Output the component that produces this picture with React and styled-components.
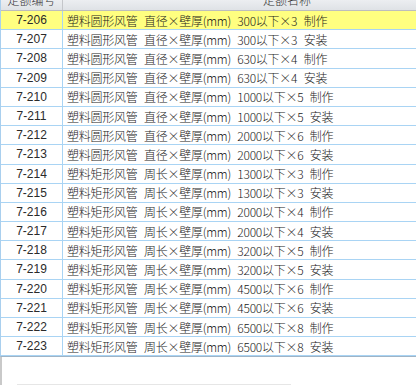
import React from 'react';
import styled, { createGlobalStyle } from 'styled-components';

const GlobalStyle = createGlobalStyle`
  html, body {
    margin: 0;
    padding: 0;
    background: #ffffff;
    overflow: hidden;
  }
`;

const Frame = styled.div`
  width: 416px;
  height: 385px;
  display: flex;
  flex-direction: column;
  overflow: hidden;
  font-family: "Noto Sans CJK SC", "Liberation Sans", sans-serif;
  font-size: 12px;
  font-weight: 300;
  color: #1a1a1a;
`;

const Grid = styled.div`
  width: 520px;
  border-left: 1px solid #a9cfee;
  border-bottom: 1px solid #9fb4c6;
  display: flex;
  flex-direction: column;
`;

const HeaderRow = styled.div`
  display: flex;
  height: 10px;
  background: linear-gradient(#eceef1, #dfe2e6);
  border-bottom: 1px solid #bdbdbd;
  overflow: hidden;
`;

const HeaderCell = styled.div`
  width: ${p => p.width}px;
  flex: none;
  box-sizing: border-box;
  text-align: center;
  line-height: 12px;
  color: #333;
  border-right: ${p => (p.divider ? '1px solid #c4c6ca' : 'none')};
  overflow: hidden;

  span {
    display: block;
    margin-top: -6px;
  }
`;

const Row = styled.div`
  display: flex;
  height: 19.2px;
  box-sizing: border-box;
  border-bottom: 1px solid #a9d4f4;
  background: ${p => (p.active ? '#ffff80' : '#ffffff')};
`;

const CodeCell = styled.div`
  flex: 0 0 62px;
  box-sizing: border-box;
  border-right: 1px solid #a9d4f4;
  text-align: center;
  line-height: 18px;
  font-family: "Liberation Sans", sans-serif;
  font-weight: 400;
  font-size: 12px;
  color: #2a2a2a;
`;

const NameCell = styled.div`
  flex: 1;
  display: flex;
  align-items: center;
  padding-left: 4px;
  white-space: pre;
  word-spacing: 4px;
  letter-spacing: -0.25px;
`;

const Filler = styled.div`
  flex: 1;
  display: flex;
  flex-direction: column;
  justify-content: flex-end;
  border-left: 2px solid #c9c9c9;
`;

const ScrollEdge = styled.div`
  margin-left: 15px;
  width: 274px;
  height: 1px;
  background: #e6e6e6;
`;

const rows = [
  ['7-206', '圆形', '直径', '300以下×3', '制作'],
  ['7-207', '圆形', '直径', '300以下×3', '安装'],
  ['7-208', '圆形', '直径', '630以下×4', '制作'],
  ['7-209', '圆形', '直径', '630以下×4', '安装'],
  ['7-210', '圆形', '直径', '1000以下×5', '制作'],
  ['7-211', '圆形', '直径', '1000以下×5', '安装'],
  ['7-212', '圆形', '直径', '2000以下×6', '制作'],
  ['7-213', '圆形', '直径', '2000以下×6', '安装'],
  ['7-214', '矩形', '周长', '1300以下×3', '制作'],
  ['7-215', '矩形', '周长', '1300以下×3', '安装'],
  ['7-216', '矩形', '周长', '2000以下×4', '制作'],
  ['7-217', '矩形', '周长', '2000以下×4', '安装'],
  ['7-218', '矩形', '周长', '3200以下×5', '制作'],
  ['7-219', '矩形', '周长', '3200以下×5', '安装'],
  ['7-220', '矩形', '周长', '4500以下×6', '制作'],
  ['7-221', '矩形', '周长', '4500以下×6', '安装'],
  ['7-222', '矩形', '周长', '6500以下×8', '制作'],
  ['7-223', '矩形', '周长', '6500以下×8', '安装'],
];

export default function App() {
  return (
    <>
      <GlobalStyle />
      <Frame>
        <Grid>
          <HeaderRow>
            <HeaderCell width={62} divider><span>定额编号</span></HeaderCell>
            <HeaderCell width={448}><span>定额名称</span></HeaderCell>
          </HeaderRow>
          {rows.map(([code, shape, dim, size, op], i) => (
            <Row key={code} active={i === 0}>
              <CodeCell>{code}</CodeCell>
              <NameCell>{`塑料${shape}风管 ${dim}×壁厚(mm) ${size} ${op}`}</NameCell>
            </Row>
          ))}
        </Grid>
        <Filler>
          <ScrollEdge />
        </Filler>
      </Frame>
    </>
  );
}
